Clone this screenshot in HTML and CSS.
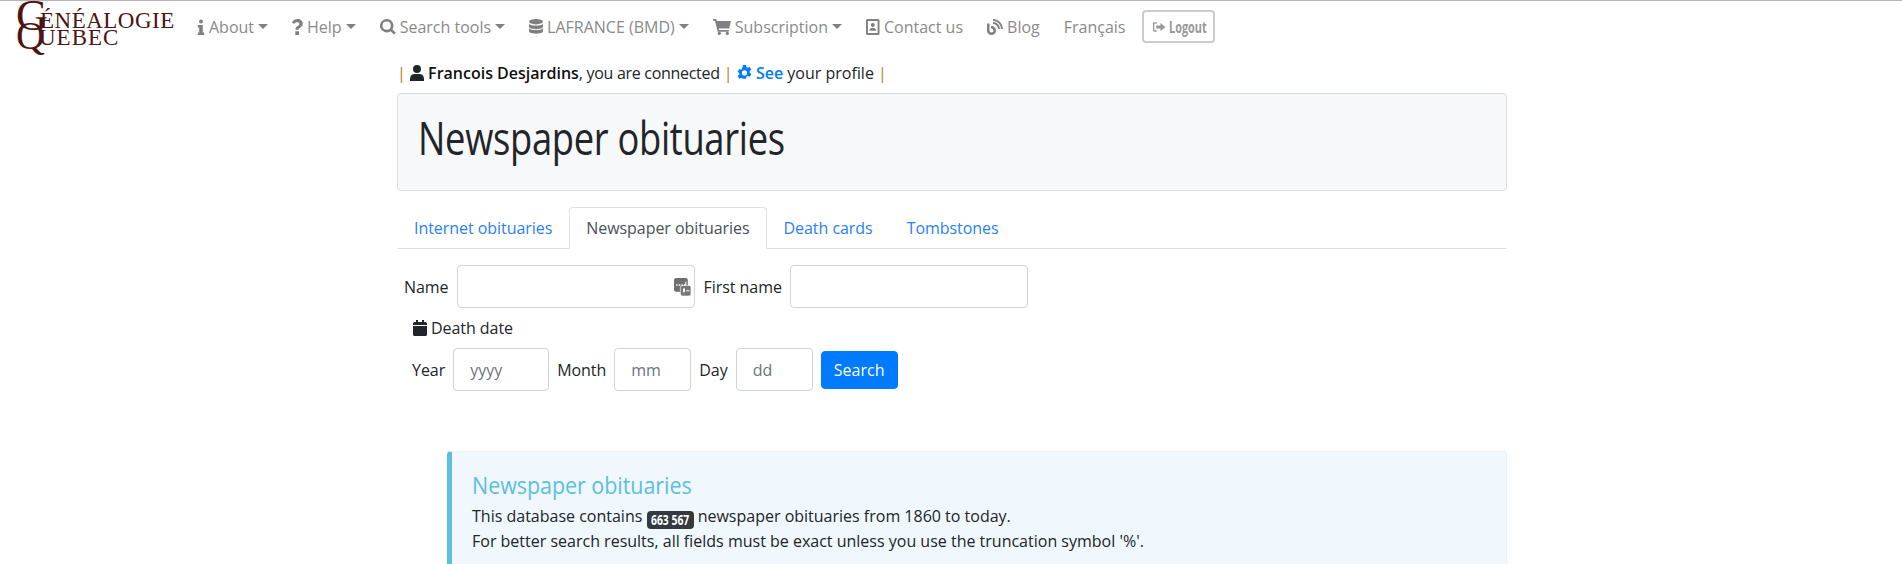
FILE: index.html
```html
<!DOCTYPE html>
<html lang="en">
<head>
  <meta charset="UTF-8">
  <title>Newspaper obituaries</title>
  <link rel="stylesheet" href="styles.css">
</head>
<body>
  <!-- menu -->
  <nav class="navbar">
    <a class="logo" href="#">
      <span class="logo-c">G</span><span class="logo-q">Q</span>
      <span class="logo-top">ÉNÉALOGIE</span>
      <span class="logo-bottom">UEBEC</span>
    </a>
    <a class="nav-item" href="#">
      <svg class="ic ic-info" viewBox="0 0 8 16"><circle cx="4" cy="2.6" r="2"/><path d="M.8 6h5v7.6h1.4V16H.8v-2.4h1.4V8.4H.8z"/></svg>
      About<span class="caret"></span></a>
    <a class="nav-item" href="#">
      <svg class="ic ic-help" viewBox="0 0 11 16"><path d="M5.6 0C2.800 0 1.200 1.300 0 3.200l2.200 1.700c.8-1 1.500-1.700 3-1.700 1.200 0 2.200.7 2.200 1.700 0 .9-.6 1.300-1.700 2C4.300 7.700 3.500 8.500 3.500 10v.8h3.300v-.5c0-.8.500-1.200 1.600-1.900C9.800 7.600 10.800 6.600 10.800 4.800 10.800 1.800 8.300 0 5.600 0zM3.300 12.300h3.700V16H3.300z"/></svg>
      Help<span class="caret"></span></a>
    <a class="nav-item" href="#">
      <svg class="ic ic-search" viewBox="0 0 16 16"><path d="M6.700 0a6.700 6.700 0 1 0 3.800 12.200l3.400 3.400 1.900-1.900-3.400-3.400A6.700 6.700 0 0 0 6.700 0zm0 2.600a4.100 4.100 0 1 1 0 8.200 4.100 4.100 0 0 1 0-8.200z"/></svg>
      Search tools<span class="caret"></span></a>
    <a class="nav-item" href="#">
      <svg class="ic ic-db" viewBox="0 0 14 16"><ellipse cx="7" cy="2.700" rx="7" ry="2.700"/><path d="M0 4.300c1.500 1.200 4 1.700 7 1.700s5.500-.5 7-1.700v2.900C14 8.700 10.900 9.600 7 9.600S0 8.700 0 7.200zM0 8.800c1.500 1.200 4 1.700 7 1.700s5.500-.5 7-1.700v2.900C14 13.200 10.900 14.100 7 14.100S0 13.200 0 11.700z" transform="translate(0 .6)"/></svg>
      LAFRANCE (BMD)<span class="caret"></span></a>
    <a class="nav-item" href="#">
      <svg class="ic ic-cart" viewBox="0 0 18 16"><path d="M0 0h3.300l.5 2H18l-1.800 7.400H5.700l.4 1.600h9.700v1.700H4.700L2 1.700H0z"/><circle cx="6.300" cy="14.400" r="1.600"/><circle cx="14.300" cy="14.400" r="1.600"/></svg>
      Subscription<span class="caret"></span></a>
    <a class="nav-item" href="#">
      <svg class="ic ic-contact" viewBox="0 0 14 16"><path fill-rule="evenodd" d="M1.500 0h10.500A1.500 1.500 0 0 1 13.500 1.500v13a1.500 1.500 0 0 1-1.500 1.500H1.500A1.500 1.500 0 0 1 0 14.500v-13A1.500 1.500 0 0 1 1.500 0zm.4 2v12h9.700V2z"/><circle cx="6.800" cy="6" r="2"/><path d="M3.400 11.700c0-1.900 1.500-3 3.400-3s3.400 1.100 3.400 3z"/></svg>
      Contact us</a>
    <a class="nav-item" href="#">
      <svg class="ic ic-blog" viewBox="0 0 16 16"><path d="M0 4.500h2.500v7a2 2 0 1 0 2-2H4V7h.5A4.500 4.500 0 1 1 0 11.500z"/><path d="M6 3a7 7 0 0 1 7 7h-2a5 5 0 0 0-5-5zM6 0a10 10 0 0 1 10 10h-2a8 8 0 0 0-8-8z"/></svg>
      Blog</a>
    <a class="nav-item" href="#">Français</a>
    <button class="btn-logout">
      <svg class="ic-logout" viewBox="0 0 14 10"><path d="M4 0H1.500A1.500 1.500 0 0 0 0 1.500v7A1.500 1.500 0 0 0 1.500 10H4V8.600H1.400V1.400H4z"/><path d="M3.500 3.300h4.500V.6L13.500 5 8 9.400V6.700H3.500z"/></svg>
      <span class="logout-text">Logout</span>
    </button>
  </nav>

  <div class="container">
    <!-- connected user -->
    <p class="userline">
      <span class="sep">|</span>
      <svg class="ic-user" viewBox="0 0 14 16"><circle cx="7" cy="4" r="4"/><path d="M0 16v-2.500C0 10.800 2 9 4.500 9h5c2.500 0 4.500 1.800 4.500 4.500V16z"/></svg>
      <b>Francois Desjardins</b><span class="connected">, you are connected</span>
      <span class="sep">|</span>
      <svg class="ic-gear" viewBox="1 0 14 16"><path fill-rule="evenodd" d="M6.400 0h3.200l.4 2.200 1.100.6 2.100-.8 1.600 2.800-1.700 1.400v1.300l1.700 1.400-1.600 2.800-2.100-.8-1.100.6-.4 2.200H6.400L6 13.500l-1.100-.6-2.100.8-1.600-2.800 1.700-1.400V8.200L1.200 6.800l1.600-2.800 2.100.8L6 2.200zM8 5.300a2.600 2.600 0 1 0 0 5.200 2.600 2.600 0 0 0 0-5.200z"/></svg>
      <a class="see" href="#">See</a> your profile
      <span class="sep">|</span>
    </p>

    <div class="jumbotron">
      <h1>Newspaper obituaries</h1>
    </div>

    <ul class="tabs">
      <li><a href="#">Internet obituaries</a></li>
      <li><a class="active" href="#">Newspaper obituaries</a></li>
      <li><a href="#">Death cards</a></li>
      <li><a href="#">Tombstones</a></li>
    </ul>

    <form class="search-form">
      <div class="form-row row-name">
        <label>Name</label>
        <div class="input-wrap">
          <input class="input input-name" type="text">
          <svg class="ic-fill" viewBox="0 0 16 17"><rect width="13" height="13" rx="2" fill="#6f6f6f"/><rect x="6" y="7" width="10" height="10" rx="2" fill="#777" stroke="#fff" stroke-width=".6"/><path d="M2 6h1.400v1.400H2zm2.500 0h1.400v1.400H4.500zM7 6h1.400v1.400H7zm2.500 0h1.400v1.400H9.500zM10.600 3.500h1v3h-1z" fill="#fff"/><path d="M8.500 10h1.800v3.500H8.500zM11.500 11.500h3v1h-3z" fill="#fff"/></svg>
        </div>
        <label>First name</label>
        <input class="input input-name" type="text">
      </div>
      <div class="date-title">
        <svg class="ic-cal" viewBox="0 0 14 16"><path d="M3 0h2v2h4V0h2v2h1.500A1.500 1.500 0 0 1 14 3.500V5H0V3.500A1.500 1.500 0 0 1 1.500 2H3zM0 6h14v8.500a1.500 1.500 0 0 1-1.500 1.500h-11A1.500 1.500 0 0 1 0 14.500z"/></svg>
        Death date
      </div>
      <div class="form-row row-date">
        <label>Year</label>
        <input class="input input-year" type="text" placeholder="yyyy">
        <label>Month</label>
        <input class="input input-small" type="text" placeholder="mm">
        <label>Day</label>
        <input class="input input-small" type="text" placeholder="dd">
        <button class="btn-search" type="button">Search</button>
      </div>
    </form>

    <div class="callout">
      <h4><span class="callout-title">Newspaper obituaries</span></h4>
      <p>This database contains <span class="badge"><span class="badge-text">663 567</span></span> newspaper obituaries from 1860 to today.</p>
      <p>For better search results, all fields must be exact unless you use the truncation symbol '%'.</p>
    </div>
  </div>
</body>
</html>
```

FILE: styles.css
```css
* {
  box-sizing: border-box;
}

html {
  overflow: hidden;
}

body {
  margin: 0;
  height: 564px;
  overflow: hidden;
  font-family: "Open Sans", "Noto Sans", sans-serif;
  font-size: 16px;
  line-height: 24px;
  letter-spacing: -.05px;
  color: #212529;
  background-color: #fff;
  border-top: 1px solid #b5b5b5;
}

a {
  text-decoration: none;
}

/* menu */
.navbar {
  display: flex;
  align-items: center;
  height: 53px;
  padding: 0 0 2px 15px;
}

.logo {
  position: relative;
  display: block;
  align-self: flex-start;
  width: 174px;
  height: 53px;
  flex: none;
  font-family: "Liberation Serif", serif;
  letter-spacing: 0;
  color: #4d1414;
}

.logo-c,
.logo-q,
.logo-top,
.logo-bottom {
  position: absolute;
  line-height: 1;
}

.logo-c {
  left: 1px;
  top: 0;
  font-size: 44px;
  line-height: 30px;
}

.logo-q {
  left: 1px;
  top: 21px;
  font-size: 40px;
  line-height: 28px;
}

.logo-top {
  left: 25px;
  top: 8px;
  font-size: 23px;
  letter-spacing: .5px;
}

.logo-bottom {
  left: 24px;
  top: 25px;
  font-size: 23px;
  letter-spacing: 1px;
}

.nav-item {
  display: flex;
  align-items: center;
  padding: 0 8px;
  margin-right: 8px;
  color: #8a8a8a;
  letter-spacing: 0;
  white-space: nowrap;
}

.ic {
  fill: #808080;
  height: 16px;
  margin-right: 4px;
}

.ic-info { width: 8px; }
.ic-help { width: 11px; }
.ic-search { width: 16px; }
.ic-db { width: 14px; }
.ic-cart { width: 18px; }
.ic-contact { width: 14px; }
.ic-blog { width: 16px; }

.caret {
  width: 0;
  height: 0;
  margin-left: 4px;
  border-top: 5px solid #808080;
  border-left: 5px solid transparent;
  border-right: 5px solid transparent;
}

.btn-logout {
  display: flex;
  align-items: center;
  justify-content: flex-start;
  width: 73px;
  height: 33px;
  margin-left: 1px;
  padding: 0 0 0 9px;
  color: #999;
  background-color: #fff;
  border: 2px solid #ccc;
  border-radius: 4px;
}

.ic-logout {
  width: 13px;
  height: 10px;
  fill: #999;
  margin-right: 3px;
}

.logout-text {
  display: inline-block;
  width: 36px;
  font-family: "Open Sans", sans-serif;
  font-size: 16px;
  font-weight: 700;
  transform: scaleX(.68);
  transform-origin: left center;
  white-space: nowrap;
}

/* page */
.container {
  width: 1110px;
  margin-left: 397px;
}

.userline {
  margin: 0;
  height: 39px;
  padding-top: 7px;
  letter-spacing: 0;
  white-space: nowrap;
}

.sep {
  color: #b57a2d;
}

.userline b {
  font-weight: 600;
  color: #111;
}

.connected {
  letter-spacing: -.3px;
}

.ic-user {
  width: 14px;
  height: 16px;
  fill: #212529;
  vertical-align: -2px;
}

.ic-gear {
  width: 15px;
  height: 16px;
  fill: #007bff;
  vertical-align: -2px;
}

.see {
  color: #007bff;
  font-weight: 600;
}

.jumbotron {
  height: 98px;
  padding: 0 20px 10px;
  display: flex;
  align-items: center;
  background-color: #f7f8fa;
  border: 1px solid #dcdfe2;
  border-radius: 4px;
}

.jumbotron h1 {
  margin: 0;
  font-size: 46px;
  font-weight: 400;
  letter-spacing: -.4px;
  line-height: 48px;
  white-space: nowrap;
  transform: scaleX(.79);
  transform-origin: left center;
}

.tabs {
  display: flex;
  list-style: none;
  margin: 16px 0 0;
  padding: 0;
  height: 42px;
  border-bottom: 1px solid #dee2e6;
}

.tabs a {
  display: block;
  height: 42px;
  padding: 8px 16px;
  color: #2a7ffa;
  border: 1px solid transparent;
  border-radius: 4px 4px 0 0;
  white-space: nowrap;
}

.tabs a.active {
  color: #495057;
  background-color: #fff;
  border-color: #dee2e6 #dee2e6 #fff;
}

/* form */
.search-form {
  padding-top: 16px;
}

.form-row {
  display: flex;
  align-items: center;
}

.row-name {
  padding-left: 7px;
  gap: 8px;
}

.input-wrap {
  position: relative;
  display: flex;
  margin-right: 1px;
}

.input {
  display: block;
  height: 43px;
  padding: 6px 12px 6px 16px;
  font-family: inherit;
  font-size: 16px;
  color: #495057;
  background-color: #fff;
  border: 1px solid #ced4da;
  border-radius: 4px;
}

.input::placeholder {
  color: #6c757d;
}

.input-name {
  width: 238px;
}

.ic-fill {
  position: absolute;
  right: 4px;
  top: 13px;
  width: 17px;
  height: 18px;
}

.date-title {
  display: flex;
  align-items: center;
  gap: 4px;
  height: 24px;
  margin: 8px 0 8px 16px;
}

.ic-cal {
  width: 14px;
  height: 16px;
  fill: #212529;
}

.row-date {
  padding-left: 15px;
  gap: 8px;
}

.input-year {
  width: 96px;
}

.input-small {
  width: 77px;
}

.btn-search {
  height: 38px;
  width: 77px;
  padding: 0;
  color: #fff;
  font-family: inherit;
  font-size: 16px;
  background-color: #007bff;
  border: 1px solid #007bff;
  border-radius: 4px;
}

/* info box */
.callout {
  margin: 60px 0 0 50px;
  height: 130px;
  padding: 17px 20px;
  background-color: #f0f7fd;
  border: 1px solid #eef0f2;
  border-left: 5px solid #5bc0de;
  border-radius: 4px;
}

.callout h4 {
  margin: 0 0 4px;
  color: #5bc0de;
  font-size: 24px;
  font-weight: 400;
  line-height: 31px;
}

.callout-title {
  display: inline-block;
  white-space: nowrap;
  transform: scaleX(.895);
  transform-origin: left center;
}

.callout p {
  margin: 0;
  letter-spacing: 0;
}

.badge {
  display: inline-block;
  width: 47px;
  height: 18px;
  vertical-align: -3px;
  background-color: #343a40;
  border-radius: 4px;
  padding-left: 4px;
  line-height: 18px;
}

.badge-text {
  display: block;
  color: #fff;
  font-size: 14px;
  font-weight: 700;
  transform: scaleX(.74);
  transform-origin: left center;
  white-space: nowrap;
}
```
